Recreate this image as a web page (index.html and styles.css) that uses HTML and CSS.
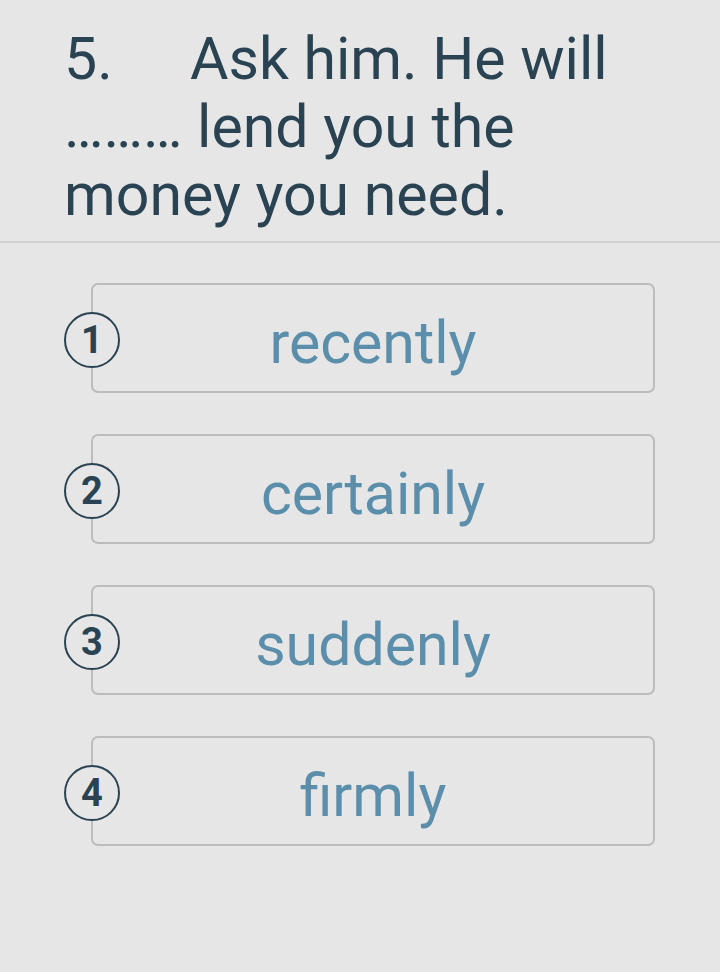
FILE: index.html
```html
<!DOCTYPE html>
<html>
<head>
<meta charset="utf-8">
<link rel="stylesheet" href="styles.css">
</head>
<body>
<div class="question">
  <p class="q-text"><span class="q-num">5.</span>Ask him. He will ……… lend you the money you need.</p>
</div>
<div class="options">
  <div class="option"><span class="badge">1</span><span class="label">recently</span></div>
  <div class="option"><span class="badge">2</span><span class="label">certainly</span></div>
  <div class="option"><span class="badge">3</span><span class="label">suddenly</span></div>
  <div class="option"><span class="badge">4</span><span class="label">firmly</span></div>
</div>
</body>
</html>
```
FILE: styles.css
```css
html, body {
  margin: 0;
  padding: 0;
  background: #e6e6e6;
  width: 720px;
  height: 972px;
  overflow: hidden;
  font-family: Roboto, "Noto Sans", sans-serif;
}
.question {
  padding: 25px 40px 12px 64px;
  border-bottom: 2px solid #d0d0d0;
}
.q-text {
  margin: 0;
  font-size: 59px;
  line-height: 68px;
  color: #2a4353;
}
.q-num {
  display: inline-block;
  width: 126px;
}
.options {
  display: flex;
  flex-direction: column;
  gap: 41px;
  padding: 40px 65px 0 91px;
}
.option {
  position: relative;
  height: 106px;
  border: 2px solid #bcbcbc;
  border-radius: 7px;
  display: flex;
  align-items: center;
  justify-content: center;
}
.label {
  font-size: 59px;
  color: #5a8eab;
  line-height: 1;
  padding-top: 8px;
}
.badge {
  position: absolute;
  left: -29px;
  top: 50%;
  transform: translateY(-50%);
  margin-top: 2px;
  box-sizing: border-box;
  width: 56px;
  height: 56px;
  border: 2px solid #2a4353;
  border-radius: 50%;
  background: #e6e6e6;
  display: flex;
  align-items: center;
  justify-content: center;
  font-size: 38px;
  font-weight: 700;
  color: #2a4353;
}
```
